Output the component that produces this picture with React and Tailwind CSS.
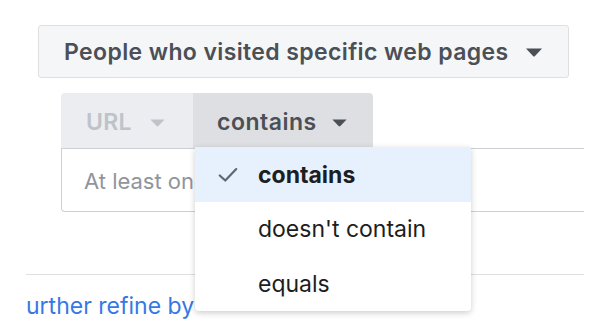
import React from "react";

const Caret = ({ className }) => (
  <svg viewBox="0 0 18 9" className={className}>
    <path d="M1 0.5 H17 L10 8 Q9 9 8 8 Z" fill="currentColor" />
  </svg>
);

export default function App() {
  return (
    <div
      className="relative w-[600px] h-[327px] bg-white overflow-hidden"
      style={{ fontFamily: "Inter, 'Noto Sans', sans-serif" }}
    >
      <div className="pt-[25px] pl-[38px]">
        <div className="w-[531px] h-[53px] border border-[#dddfe2] bg-[#f5f6f7] rounded-[3px] flex items-center pl-[25px] pt-[1px] text-[#4b4f56]">
          <span className="text-[23px] font-semibold tracking-[0.38px] whitespace-nowrap">
            People who visited specific web pages
          </span>
          <Caret className="w-[18px] h-[9px] ml-[16px] mt-[1px] shrink-0" />
        </div>
      </div>

      <div className="pl-[61px] pt-[15px]">
        <div className="flex h-[55px]">
          <div className="w-[132px] bg-[#ebedf0] rounded-tl-[4px] flex items-center pl-[25px] pt-[3px] text-[#bec3c9]">
            <span className="text-[23px] font-semibold tracking-[0.3px]">URL</span>
            <Caret className="w-[17px] h-[8px] ml-[17px] mt-[1px]" />
          </div>
          <div className="w-[180px] bg-[#dddfe2] rounded-tr-[4px] flex items-center pl-[24px] pt-[3px] text-[#4b4f56]">
            <span className="text-[23px] font-semibold tracking-[0.5px]">contains</span>
            <Caret className="w-[17px] h-[8px] ml-[14px] mt-[1px]" />
          </div>
        </div>
        <div className="w-[523px] h-[64px] border border-r-0 border-[#ccd0d5] rounded-bl-[4px] flex items-center pl-[22px] pt-[2px] text-[#90949c]">
          <span className="text-[22px] whitespace-nowrap">At least one</span>
        </div>
      </div>

      <div className="ml-[26px] mt-[62px] w-[558px] border-t border-[#dddfe2]" />
      <div className="pl-[26px] pt-[14px] text-[23px] text-[#3578e5] whitespace-nowrap">urther refine by</div>

      <div className="absolute left-[195px] top-[147px] w-[276px] bg-white rounded-b-[4px] shadow-[0_2px_6px_rgba(0,0,0,0.2)]">
        <div className="h-[55px] bg-[#e7f0fd] flex items-center pl-[22px] pt-[1px] text-[#1c1e21]">
          <svg viewBox="0 0 24 24" className="w-[22px] h-[22px] text-[#606770]">
            <path d="M3 12.5 L9 18 L21 5.5" fill="none" stroke="currentColor" strokeWidth="2.4" strokeLinecap="round" strokeLinejoin="round" />
          </svg>
          <span className="ml-[19px] text-[23px] font-bold">contains</span>
        </div>
        <div className="h-[55px] flex items-center pl-[63px] text-[23px] text-[#1c1e21] whitespace-nowrap">doesn't contain</div>
        <div className="h-[54px] flex items-center pl-[63px] text-[23px] text-[#1c1e21]">equals</div>
      </div>
    </div>
  );
}
